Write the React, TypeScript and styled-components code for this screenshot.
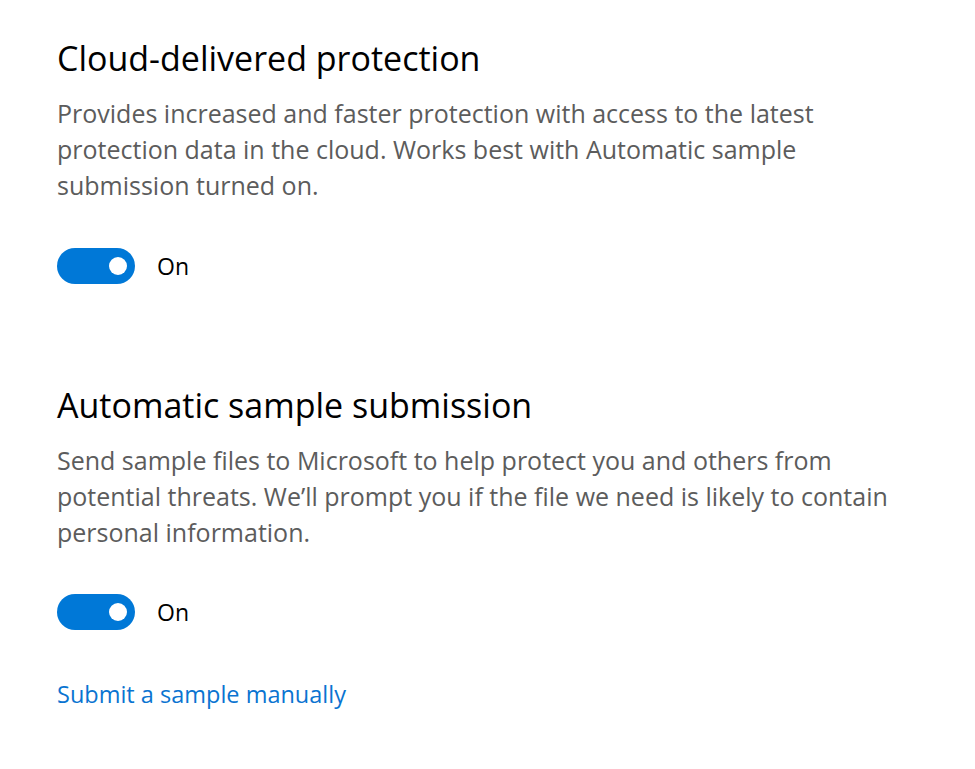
import React from "react";
import styled, { createGlobalStyle } from "styled-components";

const GlobalStyle = createGlobalStyle`
  body {
    margin: 0;
    background: #ffffff;
    font-family: "Open Sans", "Noto Sans", sans-serif;
  }
`;

const Page = styled.main`
  display: flex;
  flex-direction: column;
  padding: 38px 0 0 57px;
`;

const Section = styled.section<{ $gap?: number }>`
  display: flex;
  flex-direction: column;
  margin-top: ${(p) => p.$gap ?? 0}px;
`;

const Title = styled.h2`
  margin: 0;
  font-size: 34px;
  line-height: 40px;
  font-weight: 400;
  color: #000;
`;

const Description = styled.p`
  margin: 17px 0 0;
  font-size: 25px;
  line-height: 36px;
  color: #5c5c5c;
  white-space: nowrap;
`;

const ToggleRow = styled.div<{ $gap: number }>`
  display: flex;
  align-items: center;
  gap: 22px;
  margin-top: ${(p) => p.$gap}px;
`;

const Track = styled.div<{ $on: boolean }>`
  width: 78px;
  height: 36px;
  border-radius: 18px;
  background: ${(p) => (p.$on ? "#0078d7" : "#fff")};
  display: flex;
  align-items: center;
  justify-content: ${(p) => (p.$on ? "flex-end" : "flex-start")};
  padding: 0 8px;
  box-sizing: border-box;
`;

const Knob = styled.span`
  width: 18px;
  height: 18px;
  border-radius: 50%;
  background: #fff;
`;

const ToggleLabel = styled.span`
  font-size: 23px;
  color: #000;
`;

const Link = styled.a`
  margin-top: 46px;
  font-size: 23.5px;
  line-height: 36px;
  color: #0a74d1;
  text-decoration: none;
  align-self: flex-start;
`;

function Toggle({ on, gap }: { on: boolean; gap: number }) {
  return (
    <ToggleRow $gap={gap}>
      <Track $on={on}>
        <Knob />
      </Track>
      <ToggleLabel>{on ? "On" : "Off"}</ToggleLabel>
    </ToggleRow>
  );
}

export default function App() {
  return (
    <>
      <GlobalStyle />
      <Page>
        <Section>
          <Title>Cloud-delivered protection</Title>
          <Description>
            Provides increased and faster protection with access to the latest
            <br />
            protection data in the cloud. Works best with Automatic sample
            <br />
            submission turned on.
          </Description>
          <Toggle on gap={45} />
        </Section>
        <Section $gap={101}>
          <Title>Automatic sample submission</Title>
          <Description>
            Send sample files to Microsoft to help protect you and others from
            <br />
            potential threats. We’ll prompt you if the file we need is likely to contain
            <br />
            personal information.
          </Description>
          <Toggle on gap={44} />
        </Section>
        <Link href="#">Submit a sample manually</Link>
      </Page>
    </>
  );
}
